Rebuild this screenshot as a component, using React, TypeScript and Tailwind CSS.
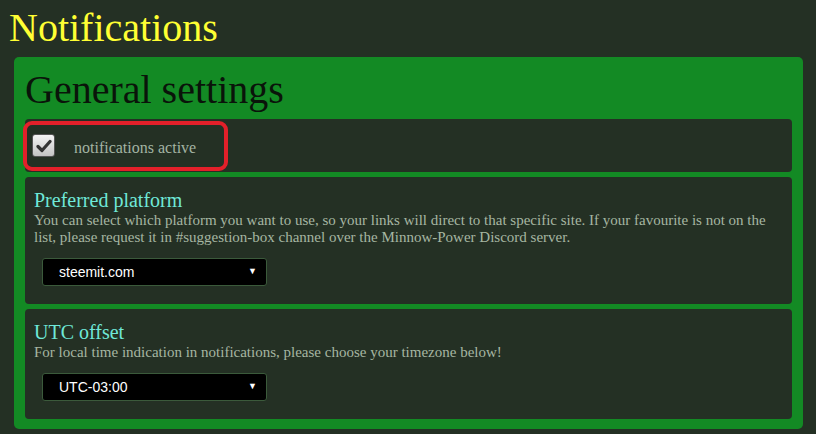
import React from 'react';

const serif = "font-['Liberation_Serif','Times_New_Roman',serif]";

const Select = ({ value }: { value: string }) => (
  <div className="ml-[8px] w-[225px] h-[28px] bg-black border border-[#3b5a3b] rounded-[3px] flex items-center justify-between pl-[16px] pr-[9px] font-['Liberation_Sans',Arial,sans-serif] text-[14px] text-white">
    <span>{value}</span>
    <span className="text-[9px]">▼</span>
  </div>
);

export default function App() {
  return (
    <div className={`w-[816px] h-[434px] overflow-hidden bg-[#243024] ${serif}`}>
      <h1 className="text-[40px] leading-none text-[#ffff33] pl-[9px] pt-[8px] h-[57px]">Notifications</h1>

      <section className="ml-[14px] w-[789px] bg-[#138a24] rounded-[5px] px-[11px] pb-[10px]">
        <h2 className="text-[40px] leading-none text-[#0a140a] pt-[13px] h-[62px]">General settings</h2>

        <div className="flex flex-col gap-[5px]">
          {/* case à cocher */}
          <div className="relative h-[53px] bg-[#243024] rounded-[4px] flex items-center pl-[7px]">
            <div className="w-[23px] h-[23px] rounded-[3px] border border-[#555] bg-gradient-to-b from-[#f4f4f4] to-[#c4c4c4] flex items-center justify-center">
              <svg width="16" height="14" viewBox="0 0 16 14">
                <path d="M2 7.5 L6 11.5 L14 2.5" stroke="#333" strokeWidth="3.2" fill="none" strokeLinecap="round" strokeLinejoin="round" />
              </svg>
            </div>
            <span className="ml-[19px] mt-[5px] text-[16px] text-[#a3b4a3]">notifications active</span>
            {/* annotation rouge */}
            <div className="absolute left-[-2px] top-[2px] w-[205px] h-[50px] border-[4px] border-[#e3202a] rounded-[9px]" />
          </div>

          <div className="h-[127px] bg-[#243024] rounded-[4px] pl-[9px] pt-[11px]">
            <h3 className="text-[20px] leading-[24px] text-[#6fe8d8]">Preferred platform</h3>
            <p className="text-[15px] leading-[17px] text-[#a6b6a2] pr-[20px]">
              You can select which platform you want to use, so your links will direct to that specific site. If your favourite is not on the list, please request it in #suggestion-box channel over the Minnow-Power Discord server.
            </p>
            <div className="mt-[12px]">
              <Select value="steemit.com" />
            </div>
          </div>

          <div className="h-[110px] bg-[#243024] rounded-[4px] pl-[9px] pt-[11px]">
            <h3 className="text-[20px] leading-[24px] text-[#6fe8d8]">UTC offset</h3>
            <p className="text-[15px] leading-[17px] text-[#a6b6a2]">
              For local time indication in notifications, please choose your timezone below!
            </p>
            <div className="mt-[12px]">
              <Select value="UTC-03:00" />
            </div>
          </div>
        </div>
      </section>
    </div>
  );
}
